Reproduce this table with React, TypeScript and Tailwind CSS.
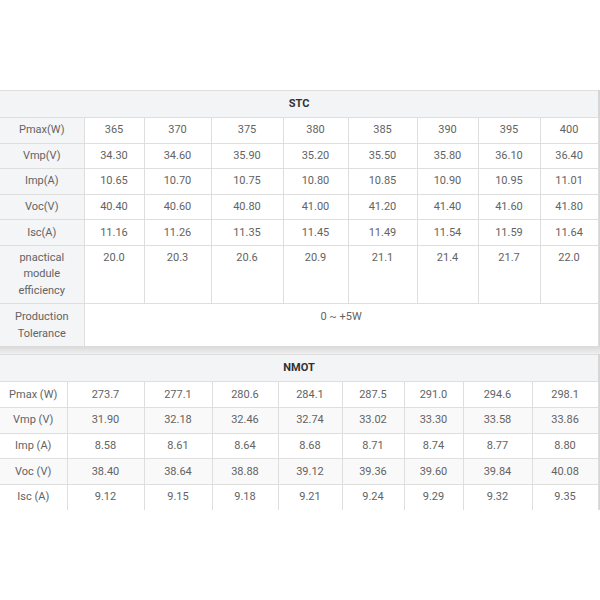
import React from "react";

const stcCols = [84, 60, 67, 72, 65, 69, 61, 62, 58];
const nmotCols = [67, 77, 68, 66, 64, 62, 59, 69, 66];

const stcRows: [string, string[]][] = [
  ["Pmax(W)", ["365", "370", "375", "380", "385", "390", "395", "400"]],
  ["Vmp(V)", ["34.30", "34.60", "35.90", "35.20", "35.50", "35.80", "36.10", "36.40"]],
  ["Imp(A)", ["10.65", "10.70", "10.75", "10.80", "10.85", "10.90", "10.95", "11.01"]],
  ["Voc(V)", ["40.40", "40.60", "40.80", "41.00", "41.20", "41.40", "41.60", "41.80"]],
  ["Isc(A)", ["11.16", "11.26", "11.35", "11.45", "11.49", "11.54", "11.59", "11.64"]],
];
const eff = ["20.0", "20.3", "20.6", "20.9", "21.1", "21.4", "21.7", "22.0"];

const nmotRows: [string, string[]][] = [
  ["Pmax (W)", ["273.7", "277.1", "280.6", "284.1", "287.5", "291.0", "294.6", "298.1"]],
  ["Vmp (V)", ["31.90", "32.18", "32.46", "32.74", "33.02", "33.30", "33.58", "33.86"]],
  ["Imp (A)", ["8.58", "8.61", "8.64", "8.68", "8.71", "8.74", "8.77", "8.80"]],
  ["Voc (V)", ["38.40", "38.64", "38.88", "39.12", "39.36", "39.60", "39.84", "40.08"]],
  ["Isc (A)", ["9.12", "9.15", "9.18", "9.21", "9.24", "9.29", "9.32", "9.35"]],
];

const cell = "border border-[#dedede] text-center align-middle px-[2px]";
const row = "h-[25.6px] py-0 leading-[16px]";

export default function App() {
  return (
    <div
      className="w-[600px] h-[600px] bg-white pt-[90px] text-[11px] text-[#636363]"
      style={{ fontFamily: "Roboto, 'Liberation Sans', sans-serif" }}
    >
      <div className="w-[600px] border-r-2 border-[#d6d6d6]">
        <table className="w-[598px] table-fixed border-collapse">
          <colgroup>
            {stcCols.map((w, i) => (
              <col key={i} style={{ width: w }} />
            ))}
          </colgroup>
          <tbody>
            <tr>
              <td colSpan={9} className="border-t border-b border-[#dedede] bg-[#f3f4f6] text-center font-bold text-[#303133] h-[27px] p-0 leading-[16px]">
                STC
              </td>
            </tr>
            {stcRows.map(([label, vals]) => (
              <tr key={label}>
                <td className={`${cell} ${row} border-l-0 bg-[#f4f5f7]`}>{label}</td>
                {vals.map((v, i) => (
                  <td key={i} className={`${cell} ${row} bg-white`}>{v}</td>
                ))}
              </tr>
            ))}
            <tr>
              <td className={`${cell} border-l-0 bg-[#f4f5f7] align-top pt-[4px] pb-[4px] leading-[16.5px]`}>
                pnactical
                <br />
                module
                <br />
                efficiency
              </td>
              {eff.map((v, i) => (
                <td key={i} className={`${cell} bg-white align-top pt-[4px] leading-[16.5px]`}>{v}</td>
              ))}
            </tr>
            <tr>
              <td className={`${cell} border-l-0 border-b-0 bg-[#f4f5f7] align-top pt-[5px] pb-[4px] leading-[16.5px]`}>
                Production
                <br />
                Tolerance
              </td>
              <td colSpan={8} className={`${cell} border-b-0 bg-white align-top pt-[5px] leading-[16.5px]`}>
                0 ~ +5W
              </td>
            </tr>
          </tbody>
        </table>
      </div>
      <div className="w-[600px] h-[8px] bg-gradient-to-b from-[#d9d9d9] to-[#efefef]" />
      <div className="w-[600px] border-r-2 border-[#d6d6d6]">
        <table className="w-[598px] table-fixed border-collapse">
          <colgroup>
            {nmotCols.map((w, i) => (
              <col key={i} style={{ width: w }} />
            ))}
          </colgroup>
          <tbody>
            <tr>
              <td colSpan={9} className="border-t border-b border-[#dedede] bg-[#f3f4f6] text-center font-bold text-[#303133] h-[27px] p-0 leading-[16px]">
                NMOT
              </td>
            </tr>
            {nmotRows.map(([label, vals], r) => (
              <tr key={label} className={r % 2 === 1 ? "bg-[#f9f9f9]" : "bg-white"}>
                <td className={`${cell} ${row} border-l-0 ${r === 4 ? "border-b-0" : ""}`}>{label}</td>
                {vals.map((v, i) => (
                  <td key={i} className={`${cell} ${row} ${r === 4 ? "border-b-0" : ""}`}>{v}</td>
                ))}
              </tr>
            ))}
          </tbody>
        </table>
      </div>
    </div>
  );
}
